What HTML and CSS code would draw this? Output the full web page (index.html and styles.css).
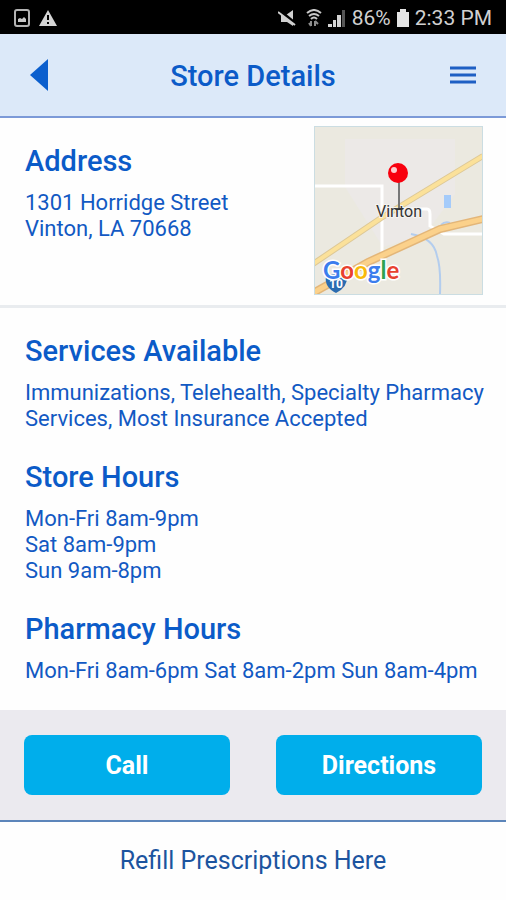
FILE: index.html
```html
<!DOCTYPE html>
<html lang="en">
<head>
    <meta charset="UTF-8">
    <meta name="viewport" content="width=device-width, initial-scale=1.0">
    <title>Store Details</title>
    <link rel="stylesheet" href="styles.css">
</head>
<body>
    <div class="status-bar">
        <div class="status-group notifications">
            <svg width="16" height="18" viewBox="0 0 16 18">
                <rect x="1" y="1" width="14" height="16" rx="2" fill="none" stroke="#b4b4b4" stroke-width="2"/>
                <path d="M4 13v-3l2-1 2 1 2-2 2 2v3z" fill="#c8c8c8"/>
            </svg>
            <svg width="18" height="16" viewBox="0 0 18 16">
                <path d="M9 0l9 16H0z" fill="#d4d4d4"/>
                <path d="M9 5v5M9 12v2" stroke="#000" stroke-width="2"/>
            </svg>
        </div>
        <div class="status-group">
            <svg width="18" height="17" viewBox="0 0 18 17">
                <path d="M3 5h5l7-5v16l-6-4H3z" fill="#d0d0d0"/>
                <path d="M1 0l17 14" stroke="#000" stroke-width="3"/>
                <path d="M0 2l17 13" stroke="#d0d0d0" stroke-width="2"/>
            </svg>
            <svg class="wifi" width="16" height="18" viewBox="0 0 16 18">
                <path d="M1 4q7-6 14 0M3 7q5-4 10 0M5 10q3-3 6 0" fill="none" stroke="#c8c8c8" stroke-width="2"/>
                <path d="M5 12v5M9 12v5M3 14l2 3M9 12l3 3" fill="none" stroke="#8c8c8c" stroke-width="2"/>
            </svg>
            <svg width="18" height="18" viewBox="0 0 18 18">
                <path d="M0 15h4v3H0zM5 11h3v7H5zM9 6h4v12H9z" fill="#d4d4d4"/>
                <path d="M14 1h3v17h-3z" fill="#555"/>
            </svg>
            <span>86%</span>
            <svg width="12" height="18" viewBox="0 0 12 18">
                <path d="M3 0h6v3h3v15H0V3h3z" fill="#e4e4e4"/>
            </svg>
            <span>2:33 PM</span>
        </div>
    </div>

    <header class="header">
        <button class="icon-button" aria-label="Back">
            <svg width="18" height="32" viewBox="0 0 18 32"><path d="M0 16L18 0v32z" fill="#0b5fce"/></svg>
        </button>
        <h1>Store Details</h1>
        <button class="icon-button" aria-label="Menu">
            <svg width="26" height="20" viewBox="0 0 26 20"><path d="M0 3h26M0 10h26M0 17h26" stroke="#1e5fc4" stroke-width="3"/></svg>
        </button>
    </header>

    <main>
        <section class="address">
            <div class="info">
                <h2>Address</h2>
                <p>1301 Horridge Street<br>Vinton, LA 70668</p>
            </div>
            <a class="map" href="#" aria-label="Map of Vinton">
                <svg width="167" height="167" viewBox="0 0 167 167">
                    <rect width="167" height="167" fill="#ebe9e0"/>
                    <path d="M30 12h110v55l-30 40-42 13-38-60z" fill="#ece9e7"/>
                    <rect x="129" y="68" width="7" height="13" fill="#a5cbfa"/>
                    <path d="M126 98q4-4 9-2M96 107q23 4 26 22 4 11 3 38" fill="none" stroke="#b3cdee" stroke-width="2"/>
                    <path d="M0 59h67v75M90 82h22q3 0 3 5v12l14 8h38" fill="none" stroke="#fff" stroke-width="3"/>
                    <path d="M-2 137L66 91 168 29" fill="none" stroke="#ddc896" stroke-width="6"/>
                    <path d="M-2 137L66 91 168 29" fill="none" stroke="#fbe19a" stroke-width="4"/>
                    <path d="M-2 166l55-31 72-33 43-10" fill="none" stroke="#e3b679" stroke-width="8"/>
                    <path d="M-2 166l55-31 72-33 43-10" fill="none" stroke="#fbd18b" stroke-width="5"/>
                    <path d="M11 149q10-4 21 0 1 11-11 17-12-6-10-17z" fill="#2b6cb0"/>
                    <text class="route" x="21" y="161" text-anchor="middle">10</text>
                    <text class="town" x="84" y="90" text-anchor="middle">Vinton</text>
                    <path d="M84 55v26" stroke="#777" stroke-width="2"/>
                    <ellipse cx="84" cy="82" rx="4" ry="1" fill="#333"/>
                    <circle cx="83" cy="46" r="10" fill="#f8000e"/>
                    <circle cx="79" cy="43" r="3" fill="#fff" opacity=".8"/>
                    <text class="google" x="8" y="152"><tspan fill="#3b7ded">G</tspan><tspan fill="#e8412f">o</tspan><tspan fill="#f9b90b">o</tspan><tspan fill="#3b7ded">g</tspan><tspan fill="#2fa34f">l</tspan><tspan fill="#e8412f">e</tspan></text>
                </svg>
            </a>
        </section>

        <section class="details">
            <div class="info">
                <h2>Services Available</h2>
                <p>Immunizations, Telehealth, Specialty Pharmacy Services, Most Insurance Accepted</p>
            </div>
            <div class="info">
                <h2>Store Hours</h2>
                <p>Mon-Fri 8am-9pm<br>Sat 8am-9pm<br>Sun 9am-8pm</p>
            </div>
            <div class="info">
                <h2>Pharmacy Hours</h2>
                <p>Mon-Fri 8am-6pm Sat 8am-2pm Sun 8am-4pm</p>
            </div>
        </section>

        <div class="actions">
            <button class="action">Call</button>
            <button class="action">Directions</button>
        </div>
    </main>

    <footer class="footer">
        <a href="#">Refill Prescriptions Here</a>
    </footer>
</body>
</html>
```

FILE: styles.css
```css
* {
    box-sizing: border-box;
}
body {
    margin: 0;
    min-height: 100vh;
    display: flex;
    flex-direction: column;
    font-family: Roboto, sans-serif;
    font-size: 22px;
    line-height: 26px;
    color: #1259c3;
    background: #fefefe;
}
h1, h2, p {
    margin: 0;
}
h1, h2 {
    font-size: 29px;
    font-weight: 500;
    line-height: 32px;
    color: #0b5bc8;
}
button {
    border: none;
    font-family: inherit;
    cursor: pointer;
}
svg {
    display: block;
}
.status-bar {
    display: flex;
    justify-content: space-between;
    align-items: center;
    height: 34px;
    padding: 2px 14px 0;
    background: #000;
    color: #d0d0d0;
    font-size: 21px;
}
.status-group {
    display: flex;
    align-items: center;
    gap: 6px;
}
.notifications {
    gap: 9px;
}
.wifi {
    margin-left: 4px;
}
.header {
    display: flex;
    justify-content: space-between;
    align-items: center;
    height: 84px;
    padding: 0 30px;
    background: #dce9f9;
    border-bottom: 2px solid #7c9ad8;
}
.header h1 {
    padding-top: 2px;
}
.icon-button {
    width: 26px;
    padding: 0;
    background: none;
}
.address {
    display: flex;
    justify-content: space-between;
    padding: 8px 23px 10px 25px;
    border-bottom: 3px solid #e9ecef;
}
.address .info {
    padding-top: 19px;
}
.info h2 {
    margin-bottom: 13px;
}
.map {
    border: 1px solid #cbdde2;
}
.town {
    font-size: 16px;
    fill: #333;
    stroke: #f5f3ef;
    stroke-width: 2px;
    paint-order: stroke;
}
.google {
    font-family: Lato, sans-serif;
    font-size: 24px;
    font-weight: 700;
    stroke: #fff;
    stroke-width: 3px;
    paint-order: stroke;
}
.route {
    font-size: 12px;
    font-weight: 700;
    fill: #fff;
}
.details {
    display: flex;
    flex-direction: column;
    gap: 29px;
    padding: 27px 20px 26px 25px;
}
.actions {
    display: flex;
    gap: 46px;
    padding: 25px 24px;
    background: #ebeaef;
    border-bottom: 2px solid #5c85ba;
}
.action {
    flex: 1;
    height: 60px;
    border-radius: 8px;
    background: #00aeeb;
    color: #fff;
    font-size: 25px;
    font-weight: 700;
}
.footer {
    flex: 1;
    display: flex;
    justify-content: center;
    align-items: center;
}
.footer a {
    color: #1c549f;
    font-size: 25px;
    text-decoration: none;
}
```
